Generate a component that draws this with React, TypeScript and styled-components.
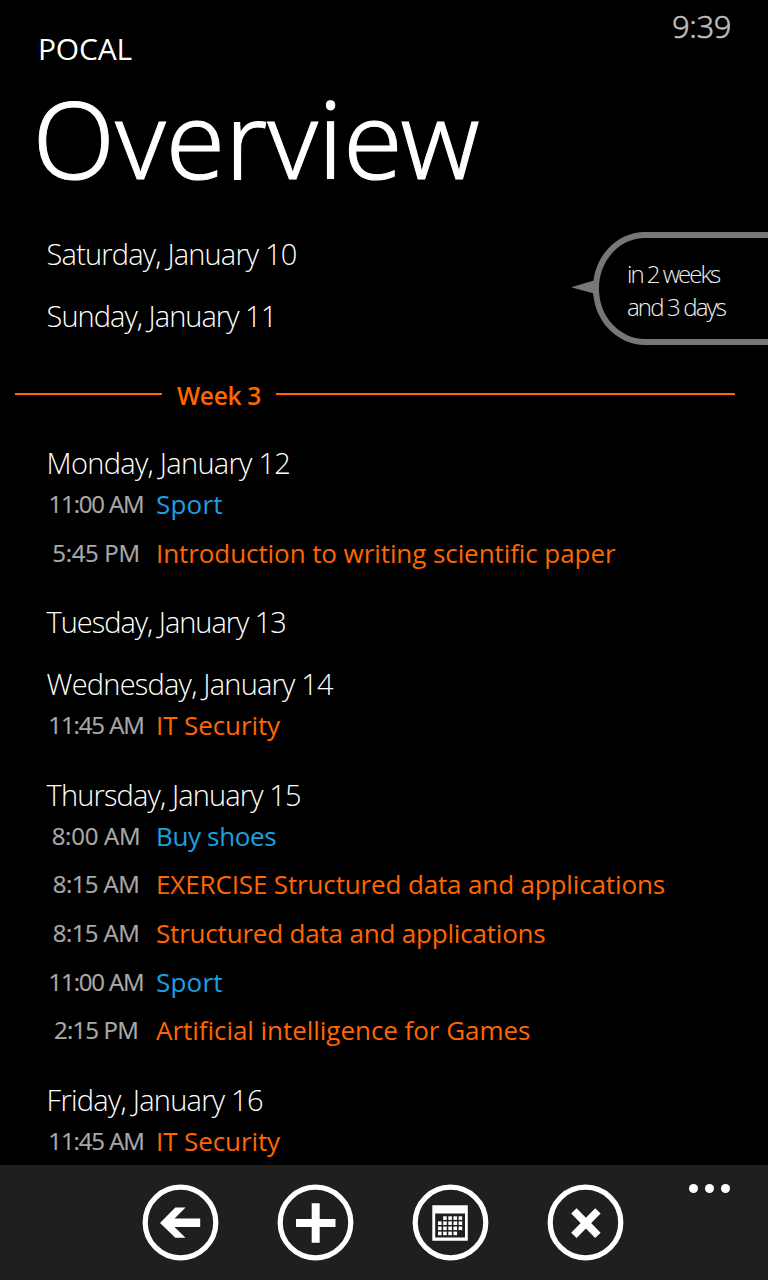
import React from "react";
import styled, { createGlobalStyle } from "styled-components";

const GlobalStyle = createGlobalStyle`
  * { box-sizing: border-box; }
  body { margin: 0; background: #000; }
`;

const accent = { orange: "#ff6600", blue: "#1ba1e2" };

const Screen = styled.div`
  position: relative;
  display: flex;
  flex-direction: column;
  width: 768px;
  height: 1280px;
  overflow: hidden;
  background: #000;
  color: #fff;
  font-family: "Open Sans", "Noto Sans", sans-serif;
  white-space: nowrap;
`;

const TopRow = styled.div`
  display: flex;
  justify-content: space-between;
  align-items: flex-start;
  height: 77px;
  padding: 0 37px 0 38px;
`;

const AppName = styled.div`
  padding-top: 29px;
  font-size: 30px;
  line-height: 40px;
  letter-spacing: -0.2px;
`;

const Clock = styled.div`
  font-family: "Noto Sans", sans-serif;
  font-size: 31px;
  font-weight: 300;
  line-height: 53px;
  letter-spacing: -0.4px;
  color: #bdbdbd;
  -webkit-text-stroke: 0.5px #bdbdbd;
`;

const Title = styled.h1`
  margin: 0;
  padding-left: 32.5px;
  font-family: "Noto Sans", sans-serif;
  font-size: 107.5px;
  font-weight: 300;
  line-height: 120px;
  letter-spacing: 0.1px;
  -webkit-text-stroke: 1px #fff;
`;

const Agenda = styled.main`
  flex: 1;
  min-height: 0;
  overflow: hidden;
  padding-top: 37px;
`;

const Day = styled.section`
  padding: 0 0 22px 46px;
`;

const Tracked = styled.span<{ $tracking: number }>`
  letter-spacing: ${(p) => p.$tracking}px;
`;

const DayName = styled.h2`
  margin: 0;
  padding-left: 0.6px;
  font-size: 29px;
  font-weight: 300;
  line-height: 40px;
`;

const Appointment = styled.div`
  display: grid;
  grid-template-columns: 100px 1fr;
  column-gap: 10px;
  height: 48.6px;
  line-height: 41px;
`;

const Time = styled.div`
  text-align: center;
  font-size: 24px;
  color: #a9a9a9;
  -webkit-text-stroke: 0.2px #a9a9a9;
`;

const Subject = styled.div<{ $color: string }>`
  font-size: 26px;
  line-height: 43px;
  color: ${(p) => p.$color};
`;

const WeekDivider = styled.div`
  display: flex;
  align-items: center;
  height: 72px;
  margin: 0 33px 13px 15px;
  color: ${accent.orange};
`;

const Rule = styled.div<{ $width?: number }>`
  flex: ${(p) => (p.$width ? `0 0 ${p.$width}px` : "1")};
  height: 2px;
  background: ${accent.orange};
`;

const WeekLabel = styled.div`
  width: 114px;
  padding-top: 2px;
  text-align: center;
  font-size: 24.5px;
  font-weight: 600;
  letter-spacing: -0.3px;
`;

const Bubble = styled.aside`
  position: absolute;
  top: 232px;
  right: 0;
  width: 175px;
  height: 113px;
  padding: 19px 0 0 28px;
  border: 6px solid #777;
  border-right: 0;
  border-radius: 52px 0 0 52px / 56px 0 0 56px;
  font-size: 24px;
  font-weight: 300;
  line-height: 33px;
  color: #f0f0f0;
`;

const Pointer = styled.svg`
  position: absolute;
  left: -28px;
  top: 41px;
`;

const BubbleLine = styled.div<{ $tracking: number }>`
  letter-spacing: ${(p) => p.$tracking}px;
`;

const AppBar = styled.footer`
  position: relative;
  display: flex;
  gap: 57px;
  flex: 0 0 115px;
  padding: 18px 0 0 141px;
  background: #1f1f1f;
`;

const IconButton = styled.button`
  width: 78px;
  height: 78px;
  padding: 0;
  border: 0;
  background: none;
  svg { display: block; }
`;

const More = styled.div`
  position: absolute;
  top: 19px;
  right: 38px;
  display: flex;
  gap: 7px;
`;

const Dot = styled.i`
  width: 9px;
  height: 9px;
  border-radius: 50%;
  background: #fff;
`;

type Entry = { time: string; subject: string; color: string };
type DayData = { name: string; entries: Entry[] };

const tracking: Record<string, number> = {
  "Saturday, January 10": -0.82,
  "Sunday, January 11": -0.97,
  "Monday, January 12": -0.7,
  "Tuesday, January 13": -1.03,
  "Wednesday, January 14": -0.78,
  "Thursday, January 15": -0.86,
  "Friday, January 16": -0.74,
  "11:00 AM": -1.15,
  "5:45 PM": -0.35,
  "11:45 AM": -1.1,
  "8:00 AM": -0.25,
  "8:15 AM": -0.6,
  "2:15 PM": -0.85,
  "Sport": 0.2,
  "Introduction to writing scientific paper": -0.08,
  "IT Security": -0.1,
  "Buy shoes": -0.35,
  "EXERCISE Structured data and applications": -0.14,
  "Structured data and applications": -0.19,
  "Artificial intelligence for Games": -0.04,
};

const { orange, blue } = accent;

const weekend: DayData[] = [
  { name: "Saturday, January 10", entries: [] },
  { name: "Sunday, January 11", entries: [] },
];

const week: DayData[] = [
  {
    name: "Monday, January 12",
    entries: [
      { time: "11:00 AM", subject: "Sport", color: blue },
      { time: "5:45 PM", subject: "Introduction to writing scientific paper", color: orange },
    ],
  },
  { name: "Tuesday, January 13", entries: [] },
  {
    name: "Wednesday, January 14",
    entries: [{ time: "11:45 AM", subject: "IT Security", color: orange }],
  },
  {
    name: "Thursday, January 15",
    entries: [
      { time: "8:00 AM", subject: "Buy shoes", color: blue },
      { time: "8:15 AM", subject: "EXERCISE Structured data and applications", color: orange },
      { time: "8:15 AM", subject: "Structured data and applications", color: orange },
      { time: "11:00 AM", subject: "Sport", color: blue },
      { time: "2:15 PM", subject: "Artificial intelligence for Games", color: orange },
    ],
  },
  {
    name: "Friday, January 16",
    entries: [{ time: "11:45 AM", subject: "IT Security", color: orange }],
  },
];

const Text = ({ children }: { children: string }) => (
  <Tracked $tracking={tracking[children] ?? 0}>{children}</Tracked>
);

const DayBlock = ({ day }: { day: DayData }) => (
  <Day>
    <DayName><Text>{day.name}</Text></DayName>
    {day.entries.map((e, i) => (
      <Appointment key={i}>
        <Time><Text>{e.time}</Text></Time>
        <Subject $color={e.color}><Text>{e.subject}</Text></Subject>
      </Appointment>
    ))}
  </Day>
);

const RoundIcon = ({ label, children }: { label: string; children: React.ReactNode }) => (
  <IconButton aria-label={label}>
    <svg width="78" height="78" viewBox="-39.5 -39.5 78 78" fill="#fff">
      <circle r="35.3" fill="none" stroke="#fff" strokeWidth="5.2" />
      {children}
    </svg>
  </IconButton>
);

const calendarCells = [0, 1, 2, 3].flatMap((row) =>
  [0, 1, 2, 3, 4]
    .filter((col) => !(row === 0 && col === 0) && !(row === 3 && col === 4))
    .map((col) => ({ x: -12.5 + col * 5.15, y: -6.2 + row * 5.1 }))
);

export default function App() {
  return (
    <Screen>
      <GlobalStyle />
      <TopRow>
        <AppName>POCAL</AppName>
        <Clock>9:39</Clock>
      </TopRow>
      <Title>Overview</Title>
      <Agenda>
        {weekend.map((d) => <DayBlock key={d.name} day={d} />)}
        <WeekDivider>
          <Rule $width={147} />
          <WeekLabel>Week 3</WeekLabel>
          <Rule />
        </WeekDivider>
        {week.map((d) => <DayBlock key={d.name} day={d} />)}
      </Agenda>
      <Bubble>
        <Pointer width="26" height="16" viewBox="0 0 26 16">
          <path d="M0 8.3 L23 1.5 V14.5 Z" fill="#777" />
        </Pointer>
        <BubbleLine $tracking={-2}>in 2 weeks</BubbleLine>
        <BubbleLine $tracking={-1.85}>and 3 days</BubbleLine>
      </Bubble>
      <AppBar>
        <RoundIcon label="Back">
          <path d="M-20.5 .4 L-5.2 -15 H5 L-6 -4.1 H19.7 V4.5 H-6 L5 15.3 H-5.2 Z" />
        </RoundIcon>
        <RoundIcon label="Add">
          <path d="M-3.8 -19.3 H4.2 V-3.6 H20 V4.6 H4.2 V20.2 H-3.8 V4.6 H-19.5 V-3.6 H-3.8 Z" />
        </RoundIcon>
        <RoundIcon label="Calendar">
          <path fillRule="evenodd" d="M-18.2 -17.2 H17.3 V18.2 H-18.2 Z M-15.3 -9 V15.1 H14.5 V-9 Z" />
          {calendarCells.map((c, i) => (
            <rect key={i} x={c.x} y={c.y} width="3.6" height="3.6" />
          ))}
        </RoundIcon>
        <RoundIcon label="Close">
          <path d="M-11.6 -11.6 L12.4 12.8 M12.4 -11.6 L-11.6 12.8" stroke="#fff" strokeWidth="7.6" fill="none" />
        </RoundIcon>
        <More>
          <Dot />
          <Dot />
          <Dot />
        </More>
      </AppBar>
    </Screen>
  );
}
